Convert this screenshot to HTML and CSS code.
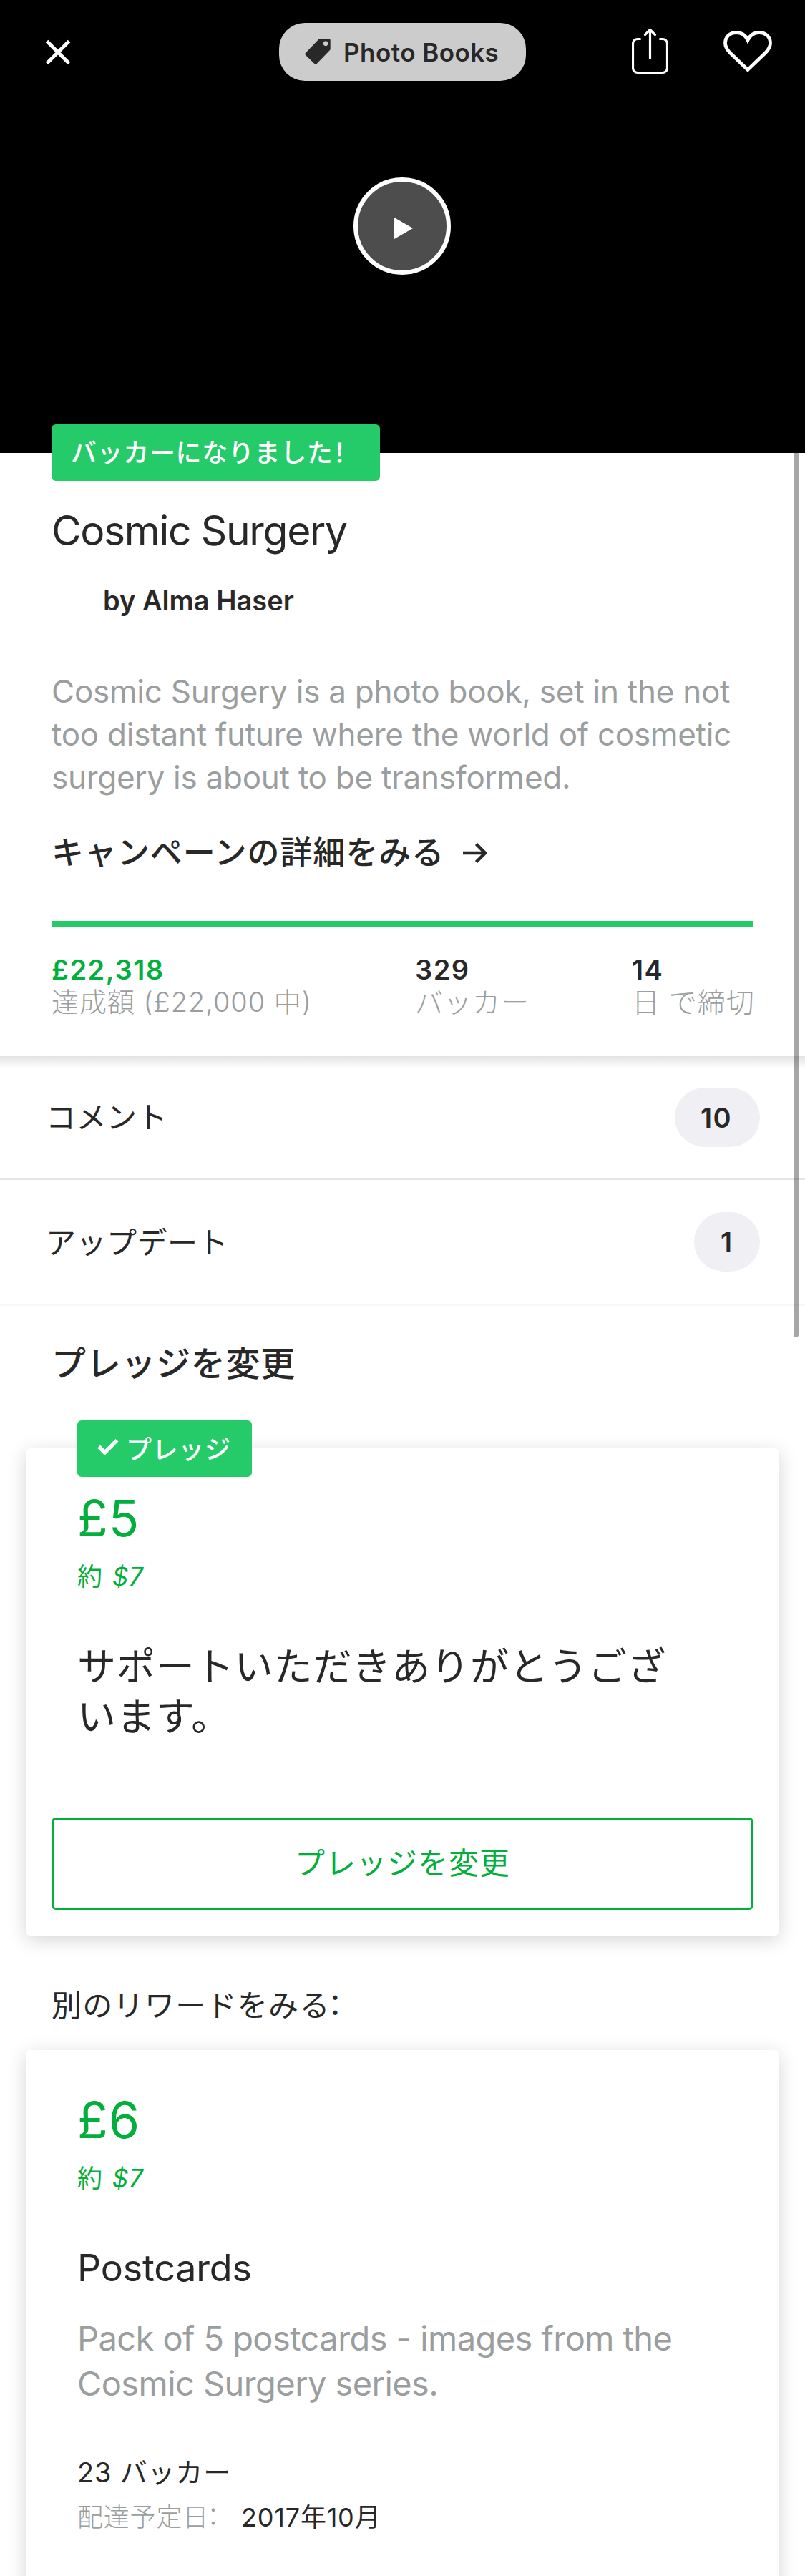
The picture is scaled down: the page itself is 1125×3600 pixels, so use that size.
FILE: index.html
```
<!DOCTYPE html>
<html lang="ja">
<head>
<meta charset="utf-8">
<title>Cosmic Surgery</title>
<link rel="stylesheet" href="styles.css">
</head>
<body>
<header class="hero">
  <nav class="nav">
    <svg class="icon-close" viewBox="0 0 36 36"><path d="M2.5 2.500 33.500 33.500M33.500 2.500 2.500 33.500"/></svg>
    <div class="category">
      <svg class="icon-tag" viewBox="0 0 108 110"><path fill-rule="evenodd" d="M60 1q2-1 4-1h38q6 0 6 6v38q0 3-2 5L50 107q-5 5-10 0L2 70q-4-5 0-9zM88 10a10.500 10.500 0 1 0 .01 0z"/></svg>
      <span>Photo Books</span>
    </div>
    <div class="actions">
      <svg class="icon-share" viewBox="0 0 51 65"><path d="M11.500 15.500H8a6.500 6.500 0 0 0-6.500 6.500v34A6.500 6.500 0 0 0 8 62.500h35a6.500 6.500 0 0 0 6.500-6.500V22a6.500 6.500 0 0 0-6.500-6.500h-3.500M25.500 42.500V3M18.500 9.500l7-7 7 7"/></svg>
      <svg class="icon-heart" viewBox="0 0 68 58"><path d="M34 54.500 9.500 31C4.500 26 2.500 22 2.500 17 2.500 8.500 9 2.500 18 2.500c8 0 13 4 16 10.500 3-6.500 8-10.500 16-10.500 9 0 15.500 6 15.500 14.500 0 5-2 9-7 14z"/></svg>
    </div>
  </nav>
  <div class="play"><svg viewBox="0 0 26 30"><path d="M0 0 26 15 0 30z"/></svg></div>
</header>

<main>
  <section class="project">
    <div class="badge badge-backer">バッカーになりました<span class="half">！</span></div>
    <h1 class="title">Cosmic Surgery</h1>
    <p class="creator">by Alma Haser</p>
    <p class="blurb">Cosmic Surgery is a photo book, set in the not<br>too distant future where the world of cosmetic<br>surgery is about to be transformed.</p>
    <div class="campaign">
      <span>キャンペーンの詳細をみる</span>
      <svg class="icon-arrow" viewBox="0 0 34 28"><path d="M0 14h31M18.500 1.500 31 14 18.500 26.500"/></svg>
    </div>
    <div class="progress"></div>
    <div class="stats">
      <div><b class="num raised">£22,318</b><span class="label">達成額 (£22,000 中)</span></div>
      <div><b class="num">329</b><span class="label label-backers">バッカー</span></div>
      <div><b class="num">14</b><span class="label label-days">日 で締切</span></div>
    </div>
  </section>

  <div class="row row-comments"><span class="row-name">コメント</span><b class="count">10</b></div>
  <div class="row row-updates"><span class="row-name">アップデート</span><b class="count">1</b></div>

  <h2 class="heading">プレッジを変更</h2>

  <article class="card">
    <div class="badge badge-pledge">
      <svg class="icon-check" viewBox="0 0 90 70"><path d="M0 39 12 26 31 46 77 0 89 11 31 70z"/></svg>
      <span>プレッジ</span>
    </div>
    <div class="amount">£5</div>
    <div class="approx">約 <i>$7</i></div>
    <p class="thanks">サポートいただきありがとうございます。</p>
    <div class="button">プレッジを変更</div>
  </article>

  <p class="others">別のリワードをみる<span class="half">：</span></p>

  <article class="card card-reward">
    <div class="amount">£6</div>
    <div class="approx">約 <i>$7</i></div>
    <h3 class="reward-title">Postcards</h3>
    <p class="reward-text">Pack of 5 postcards - images from the<br>Cosmic Surgery series.</p>
    <p class="backers">23 バッカー</p>
    <p class="delivery"><span class="delivery-label">配達予定日<span class="half">：</span></span><span class="date">2017年10月</span></p>
  </article>
</main>
<div class="scrollbar"></div>
</body>
</html>
```
FILE: styles.css
```
* { box-sizing: border-box; }

body {
  position: relative;
  height: 3600px;
  margin: 0;
  overflow: hidden;
  background: #fff;
  color: #282828;
  font-family: Inter, "Noto Sans CJK JP", sans-serif;
  white-space: nowrap;
}

h1, h2, h3, p { margin: 0; font-weight: 400; }

svg { display: block; flex: none; }

.half { font-feature-settings: "halt"; }

/* Video header */
.hero { height: 633px; padding-top: 32px; background: #000; }

.nav {
  display: grid;
  grid-template-columns: 327px 345px 1fr;
  align-items: center;
  height: 81px;
  padding: 0 46px 0 63px;
}

.icon-close { width: 36px; height: 36px; fill: none; stroke: #fff; stroke-width: 5; }

.category {
  display: flex;
  align-items: center;
  gap: 18px;
  height: 81px;
  padding-left: 36px;
  border-radius: 36px;
  background: #ccc;
  font-size: 35px;
  font-weight: 600;
  letter-spacing: .45px;
}

.icon-tag { width: 36px; height: 36px; margin-top: -1px; fill: #282828; }

.actions { display: flex; justify-content: flex-end; align-items: center; gap: 77px; }

.icon-share, .icon-heart { fill: none; stroke: #fff; stroke-linecap: round; stroke-linejoin: round; }
.icon-share { width: 51px; height: 65px; margin-top: -3px; stroke-width: 3.200; }
.icon-heart { width: 68px; height: 58px; margin-top: -2px; stroke-width: 4.800; stroke-linejoin: miter; }

.play {
  display: flex;
  align-items: center;
  justify-content: center;
  width: 136px;
  height: 136px;
  margin: 135px 0 0 494px;
  padding: 5px 0 0 3px;
  border: 6px solid #fff;
  border-radius: 50%;
  background: #4d4d4d;
}
.play svg { width: 26px; height: 30px; fill: #fff; }

/* Project summary */
.project { display: flow-root; height: 843px; padding: 0 72px; }

.badge {
  display: flex;
  align-items: center;
  height: 79px;
  border-radius: 6px;
  background: #25cb68;
  color: #fff;
  font-size: 36px;
  font-weight: 500;
  letter-spacing: .65px;
}
.badge-backer { width: 459px; margin-top: -40px; padding: 0 0 6px 27px; }

.title { margin-top: 34px; font-size: 57px; line-height: 71px; letter-spacing: -1.35px; }
.creator { margin: 37px 0 0 72px; font-size: 38px; font-weight: 600; line-height: 50px; }
.blurb { margin-top: 72px; color: #9b9e9e; font-size: 44px; line-height: 60px; letter-spacing: -.25px; }

.campaign {
  display: flex;
  align-items: center;
  gap: 26px;
  margin-top: 46px;
  font-size: 45px;
  font-weight: 500;
  line-height: 60px;
  letter-spacing: .95px;
}
.icon-arrow { width: 34px; height: 28px; fill: none; stroke: #282828; stroke-width: 4.500; }

.progress { height: 9px; margin-top: 65px; background: #25cb68; }

.stats {
  display: grid;
  grid-template-columns: 508px 303px auto;
  margin-top: 37px;
  font-size: 38px;
}
.num { display: block; font-weight: 600; line-height: 45px; letter-spacing: 1.5px; }
.raised { color: #03af3c; }
.label { display: block; color: #9b9e9e; font-weight: 300; line-height: 45px; letter-spacing: .95px; }
.label-backers { letter-spacing: 1px; }
.label-backers, .label-days { font-size: 39px; }

/* Comment and update links */
.row {
  display: flex;
  align-items: center;
  justify-content: space-between;
  height: 173px;
  padding: 0 63px 0 64px;
  border-bottom: 3px solid #e6e6e6;
  font-size: 42px;
  letter-spacing: .5px;
}
.row-name { padding-bottom: 5px; }
.row-comments { background: linear-gradient(rgba(0, 0, 0, .11), transparent 17px); }
.row-updates { height: 176px; border-color: #f7f7f7; }

.count {
  height: 83px;
  padding: 0 36px;
  border-radius: 42px;
  background: #efeff4;
  font-size: 38px;
  font-weight: 600;
  line-height: 84px;
  letter-spacing: 1.5px;
}
.row-comments .count { width: 119px; }
.row-updates .count { width: 92px; padding-left: 37px; }

.heading { margin: 51px 0 0 72px; font-size: 48px; font-weight: 500; line-height: 60px; letter-spacing: .7px; }

/* Reward cards */
.card {
  display: flow-root;
  height: 681px;
  margin: 88px 36px 0;
  padding: 0 36px;
  border-radius: 6px;
  background: #fff;
  box-shadow: 0 6px 27px rgba(0, 0, 0, .17);
}
.card > * { margin-left: 36px; }

.badge-pledge { width: 244px; margin-top: -39px; padding: 0 0 4px 28px; gap: 10px; }
.icon-check { width: 30px; height: 23px; fill: #fff; }

.amount { margin-top: 16px; color: #03af3c; font-size: 70px; line-height: 84px; letter-spacing: .9px; }
.approx { margin-top: 17px; color: #03af3c; font-size: 35px; line-height: 44px; letter-spacing: .9px; word-spacing: 2px; }

.thanks {
  width: 860px;
  margin-top: 70px;
  font-size: 54px;
  line-height: 70px;
  letter-spacing: .9px;
  white-space: normal;
}

.card .button {
  height: 129px;
  margin: 105px 0 0;
  border: 3px solid #03af3c;
  border-radius: 6px;
  color: #03af3c;
  font-size: 42px;
  line-height: 122px;
  letter-spacing: 1px;
  text-align: center;
}

.others { margin: 70px 0 0 72px; font-size: 42px; line-height: 56px; letter-spacing: 1.3px; }
.others .half { margin-left: -4px; }

.card-reward { height: 780px; margin-top: 34px; }
.card-reward .amount { margin-top: 56px; }
.reward-title { margin-top: 71px; font-size: 52px; line-height: 66px; letter-spacing: -.2px; }
.reward-text { margin-top: 33px; color: #9b9e9e; font-size: 47px; line-height: 63px; letter-spacing: -.57px; }
.backers { margin-top: 68px; font-size: 38px; line-height: 50px; letter-spacing: .8px; }
.delivery { display: flex; margin-top: 13px; font-size: 36px; line-height: 50px; letter-spacing: .8px; }
.delivery-label { width: 229px; color: #9b9e9e; font-weight: 300; }
.delivery-label .half { margin-left: -3px; }

.scrollbar {
  position: absolute;
  top: 633px;
  right: 9px;
  width: 7px;
  height: 1236px;
  border-radius: 0 0 4px 4px;
  background: rgba(0, 0, 0, .35);
}
```
